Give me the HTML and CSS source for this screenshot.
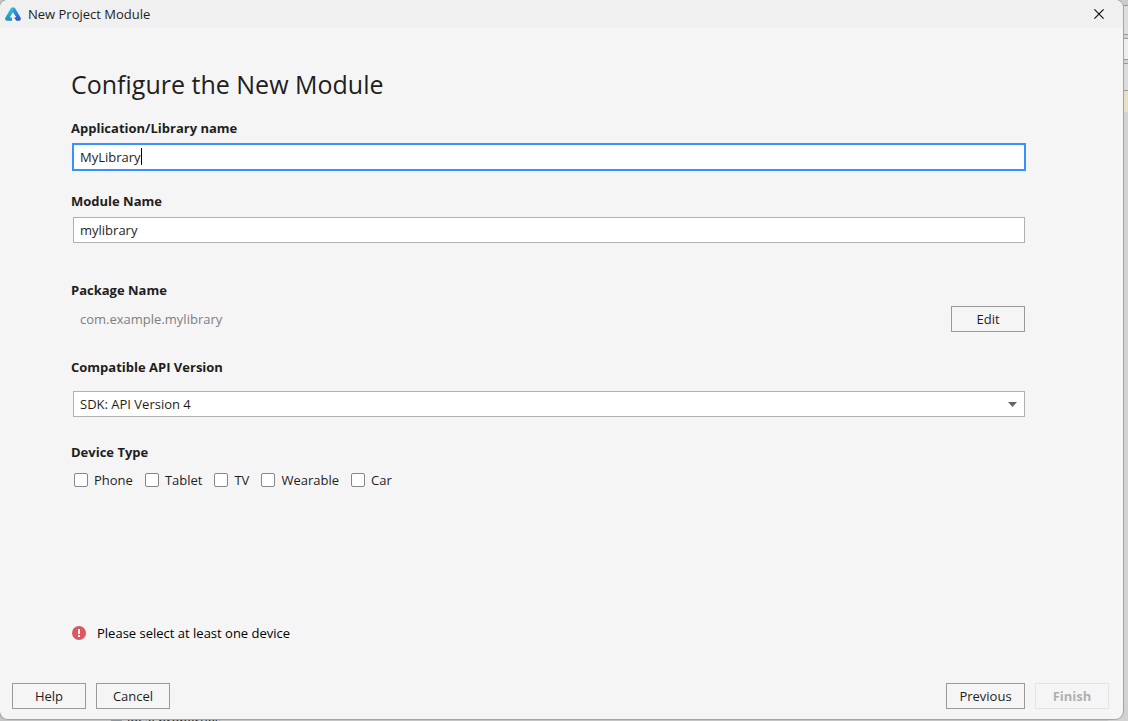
FILE: index.html
```html
<!DOCTYPE html>
<html lang="en">
<head>
<meta charset="utf-8">
<title>New Project Module</title>
<link rel="stylesheet" href="styles.css">
</head>
<body>
<div class="backdrop" aria-hidden="true">
  <div class="backdrop-side">
    <span class="strip strip-top"></span>
    <span class="strip strip-bar"></span>
    <span class="strip strip-gap"></span>
    <span class="strip strip-tabs"></span>
    <span class="strip strip-gap"></span>
    <span class="strip strip-path"></span>
    <span class="strip strip-note"></span>
  </div>
  <div class="backdrop-file"><i class="file-icon"></i>local.properties</div>
</div>
<main class="dialog">
  <header class="titlebar">
    <svg class="logo" viewBox="0 0 16 14" aria-hidden="true">
      <defs>
        <linearGradient id="lg" x1="0" y1="0" x2="0" y2="1"><stop offset="0" stop-color="#35c3e0"/><stop offset="1" stop-color="#1f8fbf"/></linearGradient>
        <linearGradient id="rg" x1="0" y1="0" x2="0" y2="1"><stop offset="0" stop-color="#35a8e4"/><stop offset="1" stop-color="#2b55c8"/></linearGradient>
      </defs>
      <path d="M8 0.3 C6.6 0.3 6 1 5.4 2 L0.6 10.2 C-0.5 12.2 0.5 13.7 2.2 13.7 H7 V10.6 H5.2 L4.9 10 L8 5.2 Z" fill="url(#lg)"/>
      <path d="M8 0.3 C9.4 0.3 10 1 10.6 2 L15.4 10.2 C16.5 12.2 15.5 13.7 13.8 13.7 H11.4 L9.2 10.8 L11.2 10 L8 5.2 Z" fill="url(#rg)"/>
    </svg>
    <span class="window-title">New Project Module</span>
    <button class="close" type="button" aria-label="Close">
      <svg viewBox="0 0 10 10" aria-hidden="true"><path d="M0.4 0.4 L9.6 9.6 M9.6 0.4 L0.4 9.6" stroke="#111" stroke-width="1.2" fill="none"/></svg>
    </button>
  </header>
  <form class="form">
    <h1 class="heading">Configure the New Module</h1>
    <label class="label" for="app-name">Application/Library name</label>
    <div class="active-field">
      <input class="input input-active" id="app-name" type="text" value="MyLibrary">
      <span class="caret"></span>
    </div>
    <label class="label label-module" for="module-name">Module Name</label>
    <input class="input" id="module-name" type="text" value="mylibrary">
    <div class="label label-package">Package Name</div>
    <div class="package">
      <span class="package-name">com.example.mylibrary</span>
      <button class="button" type="button">Edit</button>
    </div>
    <label class="label label-api" for="api">Compatible API Version</label>
    <div class="select-wrap">
      <select class="input select" id="api"><option>SDK: API Version 4</option></select>
      <svg class="arrow" viewBox="0 0 9 5" aria-hidden="true"><path d="M0 0 H9 L4.5 5 Z" fill="#666"/></svg>
    </div>
    <fieldset class="devices">
      <legend class="label">Device Type</legend>
      <div class="device-list">
        <label class="device"><input class="check" type="checkbox">Phone</label>
        <label class="device"><input class="check" type="checkbox">Tablet</label>
        <label class="device"><input class="check" type="checkbox">TV</label>
        <label class="device"><input class="check" type="checkbox">Wearable</label>
        <label class="device"><input class="check" type="checkbox">Car</label>
      </div>
    </fieldset>
    <p class="error">
      <svg class="error-icon" viewBox="0 0 14 14" aria-hidden="true"><circle cx="7" cy="7" r="7" fill="#db5860"/><path d="M6 3h2v5H6zM6 9h2v2H6z" fill="#fff"/></svg>
      Please select at least one device
    </p>
  </form>
  <footer class="footer">
    <button class="button" type="button">Help</button>
    <button class="button" type="button">Cancel</button>
    <button class="button button-previous" type="button">Previous</button>
    <button class="button button-finish" type="button" disabled>Finish</button>
  </footer>
</main>
</body>
</html>
```
FILE: styles.css
```css
* { box-sizing: border-box; }
body {
  margin: 0;
  height: 100vh;
  padding: 0 5px 2px 0;
  display: flex;
  overflow: hidden;
  background: #c4c4c4;
  color: #1e1e1e;
  font: 13px/20px "Open Sans", "Noto Sans", sans-serif;
}
input, select, button { font: inherit; color: inherit; margin: 0; }

.backdrop { position: absolute; inset: 0; overflow: hidden; }
.backdrop-side {
  position: absolute;
  top: 0;
  right: 0;
  bottom: 0;
  width: 20px;
  background: #d2d2d2;
}
.strip { display: block; border-bottom: 1px solid #999; }
.strip-top { height: 6px; background: #ccc; }
.strip-bar { height: 29px; background: #dedede; }
.strip-gap { height: 4px; }
.strip-tabs { height: 21px; background: #eee; }
.strip-path { height: 27px; background: #dcdcdc; }
.strip-note { height: 21px; background: #e6e0c4; border: 0; }
.backdrop-file { position: absolute; left: 111px; bottom: -10px; display: flex; align-items: center; gap: 5px; }
.file-icon { width: 11px; height: 14px; background: #8d979d; }

.dialog {
  position: relative;
  flex: 1;
  min-width: 0;
  display: flex;
  flex-direction: column;
  overflow: hidden;
  background: #f5f5f5;
  border-radius: 8px;
  box-shadow: 0 0 0 1px #a4a4a4;
}
.titlebar { display: flex; align-items: center; height: 28px; padding: 0 19px 0 5px; background: #f0f0f0; }
.logo { width: 16px; height: 14px; margin-right: 7px; }
.window-title { flex: 1; }
.close { display: flex; padding: 0; border: 0; background: none; }
.close svg { width: 10px; height: 10px; }

.form { flex: 1; display: flex; flex-direction: column; padding: 36px 97px 0 71px; }
.heading { margin: 0 0 14px; font-size: 25px; line-height: 40px; font-weight: 400; }
.label { padding: 0; font-weight: 700; }
.label-module { margin-top: 20px; }
.label-package { margin-top: 37px; }
.label-api { margin-top: 25px; }
.input {
  height: 26px;
  margin: 6px 1px 0 2px;
  padding: 0 6px;
  border: 1px solid #b0b0b0;
  border-radius: 0;
  background: #fff;
  outline: 0;
}
.active-field { position: relative; display: flex; margin: 5px 0 0 1px; }
.input-active { flex: 1; height: 28px; margin: 0; border: 2px solid #3592ff; }
.caret { position: absolute; left: 69px; top: 5px; width: 1px; height: 17px; background: #000; }
.package { display: flex; align-items: center; margin: 6px 1px 0 9px; }
.package-name { flex: 1; color: #808080; }
.button { min-width: 74px; height: 26px; padding: 0 12px; border: 1px solid #999; background: #f5f5f5; }
.select-wrap { position: relative; display: flex; margin-top: 14px; }
.select { flex: 1; margin-top: 0; appearance: none; }
.arrow { position: absolute; right: 9px; top: 11px; width: 9px; height: 5px; pointer-events: none; }
.devices { margin: 25px 0 0; padding: 0; border: 0; }
.device-list { display: flex; gap: 12px; margin: 8px 0 0 3px; }
.device { display: flex; align-items: center; gap: 6px; }
.check { appearance: none; width: 14px; height: 14px; border: 1px solid #878787; border-radius: 2px; background: #fff; }
.error { display: flex; align-items: center; gap: 11px; margin: auto 0 30px 1px; color: #000; }
.error-icon { width: 14px; height: 14px; }

.footer { display: flex; gap: 10px; padding: 10px 14px 10px 12px; }
.button-previous { margin-left: auto; min-width: 79px; }
.button-finish { border-color: #e4e4e4; color: #b0b0b0; font-weight: 700; }
```
